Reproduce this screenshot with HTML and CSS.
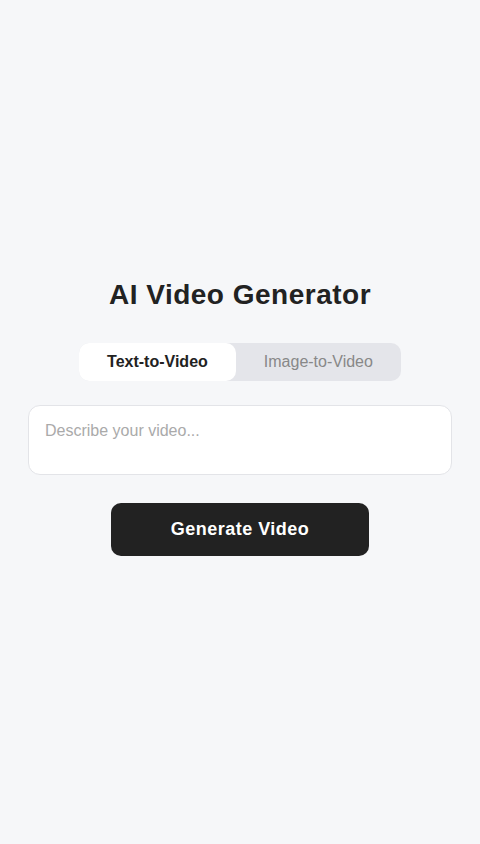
FILE: index.html
```html
<!DOCTYPE html>
<html>
<head>
    <title>AI Video Generator</title>
    <link rel="stylesheet" href="styles.css">
</head>
<body>
    <div class="app">
        <h1>AI Video Generator</h1>

        <div class="tabs">
            <button class="tab active">Text-to-Video</button>
            <button class="tab">Image-to-Video</button>
        </div>

        <textarea class="prompt" placeholder="Describe your video..."></textarea>

        <button class="generate">Generate Video</button>
    </div>
</body>
</html>
```

FILE: styles.css
```css
body { margin: 0; background: #f6f7f9; font-family: "Liberation Sans", Arial, sans-serif; color: #222; }
.app { min-height: 844px; box-sizing: border-box; padding: 0 28px 10px; display: flex; flex-direction: column; align-items: center; justify-content: center; }
h1 { margin: 0 0 32px; font-size: 28px; font-weight: bold; letter-spacing: 0.5px; color: #222; }
.tabs { display: flex; background: #e4e5ea; border-radius: 10px; margin-bottom: 24px; }
.tab { font-family: inherit; font-size: 16px; height: 38px; padding: 0 28px; border: none; background: transparent; color: #888; border-radius: 10px; cursor: pointer; }
.tab.active { background: #fff; color: #222; font-weight: bold; }
.prompt { width: 100%; box-sizing: border-box; height: 70px; padding: 16px; border: 1px solid #e3e4e8; border-radius: 12px; background: #fff; font-family: inherit; font-size: 16px; resize: none; margin-bottom: 28px; }
.prompt::placeholder { color: #aaa; }
.generate { font-family: inherit; font-size: 18px; font-weight: bold; letter-spacing: 0.5px; color: #fff; background: #222; border: none; border-radius: 10px; height: 53px; padding: 0 60px; cursor: pointer; }
```
